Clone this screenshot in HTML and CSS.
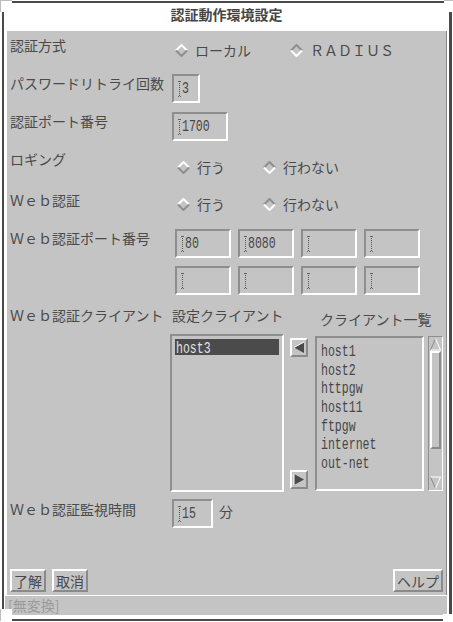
FILE: index.html
```html
<!DOCTYPE html>
<html lang="ja">

<head>
    <meta charset="UTF-8">
    <title>認証動作環境設定</title>
    <link rel="stylesheet" href="styles.css">
</head>

<body>
    <div class="window">
        <div class="corner corner-tl"></div>
        <div class="corner corner-tr"></div>
        <div class="corner corner-bl"></div>
        <div class="corner corner-br"></div>

        <div class="title">認証動作環境設定</div>

        <div class="panel">
            <div class="row row-a">
                <div class="label">認証方式</div>
                <div class="radios radios-wide">
                    <label class="radio">
                        <svg class="diamond" width="13" height="13" viewBox="0 0 13 13">
                            <polyline class="hi" points="1,6.5 6.5,1 12,6.5" />
                            <polyline class="lo" points="1,6.5 6.5,12 12,6.5" />
                        </svg>ローカル</label>
                    <label class="radio on">
                        <svg class="diamond" width="13" height="13" viewBox="0 0 13 13">
                            <polyline class="hi" points="1,6.5 6.5,1 12,6.5" />
                            <polyline class="lo" points="1,6.5 6.5,12 12,6.5" />
                        </svg>ＲＡＤＩＵＳ</label>
                </div>
            </div>

            <div class="row row-b">
                <div class="label">パスワードリトライ回数</div>
                <div class="field w-28"><span class="caret"></span><span class="num">3</span></div>
            </div>

            <div class="row row-c">
                <div class="label">認証ポート番号</div>
                <div class="field w-56"><span class="caret"></span><span class="num">1700</span></div>
            </div>

            <div class="row row-d">
                <div class="label">ロギング</div>
                <div class="radios">
                    <label class="radio">
                        <svg class="diamond" width="13" height="13" viewBox="0 0 13 13">
                            <polyline class="hi" points="1,6.5 6.5,1 12,6.5" />
                            <polyline class="lo" points="1,6.5 6.5,12 12,6.5" />
                        </svg>行う</label>
                    <label class="radio on">
                        <svg class="diamond" width="13" height="13" viewBox="0 0 13 13">
                            <polyline class="hi" points="1,6.5 6.5,1 12,6.5" />
                            <polyline class="lo" points="1,6.5 6.5,12 12,6.5" />
                        </svg>行わない</label>
                </div>
            </div>

            <div class="row row-e">
                <div class="label">Ｗｅｂ認証</div>
                <div class="radios">
                    <label class="radio">
                        <svg class="diamond" width="13" height="13" viewBox="0 0 13 13">
                            <polyline class="hi" points="1,6.5 6.5,1 12,6.5" />
                            <polyline class="lo" points="1,6.5 6.5,12 12,6.5" />
                        </svg>行う</label>
                    <label class="radio on">
                        <svg class="diamond" width="13" height="13" viewBox="0 0 13 13">
                            <polyline class="hi" points="1,6.5 6.5,1 12,6.5" />
                            <polyline class="lo" points="1,6.5 6.5,12 12,6.5" />
                        </svg>行わない</label>
                </div>
            </div>

            <div class="row row-f">
                <div class="label">Ｗｅｂ認証ポート番号</div>
                <div class="ports">
                    <div class="field w-56"><span class="caret"></span><span class="num">80</span></div>
                    <div class="field w-56"><span class="caret"></span><span class="num">8080</span></div>
                    <div class="field w-56"><span class="caret"></span></div>
                    <div class="field w-56"><span class="caret"></span></div>
                    <div class="field w-56"><span class="caret"></span></div>
                    <div class="field w-56"><span class="caret"></span></div>
                    <div class="field w-56"><span class="caret"></span></div>
                    <div class="field w-56"><span class="caret"></span></div>
                </div>
            </div>

            <div class="row row-g">
                <div class="label">Ｗｅｂ認証クライアント</div>
                <div class="clients">
                    <div class="col-set">
                        <div class="head">設定クライアント</div>
                        <div class="list list-set">
                            <div class="item selected"><span class="mono">host3</span></div>
                        </div>
                    </div>
                    <div class="arrows">
                        <div class="arrow-btn">
                            <svg width="14" height="15" viewBox="0 0 14 15">
                                <polygon points="2,7.5 12,2 12,13" fill="#4a4a4a" />
                                <polyline points="12,2 2,7.5" stroke="#fff" stroke-width="1" fill="none" />
                            </svg>
                        </div>
                        <div class="arrow-btn">
                            <svg width="14" height="15" viewBox="0 0 14 15">
                                <polygon points="12,7.5 2,2 2,13" fill="#4a4a4a" />
                                <polyline points="2,13 2,2" stroke="#fff" stroke-width="1" fill="none" />
                            </svg>
                        </div>
                    </div>
                    <div class="col-all">
                        <div class="head head-all">クライアント一覧</div>
                        <div class="list-wrap">
                            <div class="list list-all">
                                <div class="item"><span class="mono">host1</span></div>
                                <div class="item"><span class="mono">host2</span></div>
                                <div class="item"><span class="mono">httpgw</span></div>
                                <div class="item"><span class="mono">host11</span></div>
                                <div class="item"><span class="mono">ftpgw</span></div>
                                <div class="item"><span class="mono">internet</span></div>
                                <div class="item"><span class="mono">out-net</span></div>
                            </div>
                            <div class="scrollbar">
                                <svg class="sb-arrow" width="13" height="14" viewBox="0 0 13 14">
                                    <polyline points="1.5,13 6.5,1.5" stroke="#8a8a8a" fill="none" />
                                    <polyline points="6.5,1.5 11.5,13 1.5,13" stroke="#fff" fill="none" />
                                </svg>
                                <div class="thumb"></div>
                                <div class="track"></div>
                                <svg class="sb-arrow" width="13" height="14" viewBox="0 0 13 14">
                                    <polyline points="1.5,1 6.5,12.5" stroke="#8a8a8a" fill="none" />
                                    <polyline points="1.5,1 11.5,1 6.5,12.5" stroke="#fff" fill="none" />
                                </svg>
                            </div>
                        </div>
                    </div>
                </div>
            </div>

            <div class="row row-h">
                <div class="label">Ｗｅｂ認証監視時間</div>
                <div class="with-unit">
                    <div class="field w-41"><span class="caret"></span><span class="num">15</span></div>
                    <span class="unit">分</span>
                </div>
            </div>

            <div class="footer">
                <button class="btn">了解</button>
                <button class="btn">取消</button>
                <button class="btn btn-help">ヘルプ</button>
            </div>
        </div>

        <div class="status">[無変換]</div>
    </div>
</body>

</html>
```

FILE: styles.css
```css
body {
    margin: 0;
    background-color: #fff;
    font-family: "Noto Sans CJK JP", "Liberation Sans", sans-serif;
    font-size: 14px;
    color: #4a4a4a;
}

.window {
    position: relative;
    width: 445px;
    height: 616px;
    margin: 1px 0 0 2px;
    border-style: solid;
    border-color: #4a4a4a;
    border-width: 2px 3px 2px 2px;
    background-color: #fff;
}

/* frame corner handles */
.corner {
    position: absolute;
    width: 11px;
    height: 11px;
    background-color: #fff;
    border-top: 1px solid #bdbdbd;
    border-left: 1px solid #bdbdbd;
}

.corner-tl {
    left: -4px;
    top: -3px;
}

.corner-tr {
    right: -5px;
    top: -3px;
    width: 10px;
    border-left: none;
}

.corner-bl {
    left: -4px;
    bottom: -4px;
    height: 14px;
    border-top: none;
}

.corner-br {
    right: -5px;
    bottom: -4px;
    height: 9px;
    border-top: none;
    border-left: none;
}

.title {
    height: 28px;
    padding-top: 2px;
    box-sizing: border-box;
    line-height: 18px;
    text-align: center;
    font-weight: bold;
    color: #454545;
}

.panel {
    margin: 0 2px 0 3px;
    padding: 5px 3px 3px 3px;
    background-color: #c4c4c4;
    border-right: 1px solid #8a8a8a;
    display: flex;
    flex-direction: column;
}

.row {
    display: grid;
    grid-template-columns: 162px 1fr;
    align-items: start;
}

.label {
    line-height: 18px;
    white-space: nowrap;
}

.row-b { margin-top: 15px; }
.row-c { margin-top: 9px; }
.row-d { margin-top: 9px; }
.row-e { margin-top: 15px; }
.row-f { margin-top: 16px; }
.row-g { margin-top: 11px; }
.row-h { margin-top: 7px; }

.row-h .label { padding-top: 1px; }

/* radio diamonds */
.radios {
    display: flex;
    align-items: center;
    height: 18px;
    margin-left: 5px;
    line-height: 18px;
}

.row-a .radios { margin-top: 5px; margin-left: 3px; }
.row-d .radios { margin-top: 8px; }
.row-e .radios { margin-top: 4px; }

.radio {
    display: flex;
    align-items: center;
    width: 86px;
    white-space: nowrap;
}

.radios-wide .radio:first-child {
    width: 115px;
}

.diamond {
    flex: none;
    margin-right: 7px;
}

.diamond polyline {
    fill: none;
    stroke-width: 2;
}

.diamond .hi { stroke: #fff; }
.diamond .lo { stroke: #8e8e8e; }

.radio.on .diamond .hi { stroke: #8e8e8e; }
.radio.on .diamond .lo { stroke: #fff; }

/* text fields */
.field {
    display: flex;
    align-items: center;
    box-sizing: border-box;
    height: 29px;
    padding-left: 4px;
    border: 2px solid;
    border-color: #8e8e8e #fff #fff #8e8e8e;
}

.w-28 { width: 28px; }
.w-41 { width: 41px; }
.w-56 { width: 56px; }

.caret {
    position: relative;
    width: 3px;
    height: 15px;
    margin-right: 1px;
}

.caret::before {
    content: "";
    position: absolute;
    left: 1px;
    top: 0;
    height: 15px;
    border-left: 1px dotted #555;
}

.caret::after {
    content: "";
    position: absolute;
    left: 0;
    top: 0;
    width: 3px;
    height: 14px;
    border-top: 1px dotted #666;
    border-bottom: 1px dotted #666;
}

.num,
.mono {
    display: inline-block;
    font-family: "Liberation Mono", "DejaVu Sans Mono", monospace;
    font-size: 17px;
    transform: scaleX(0.68);
    transform-origin: left center;
    color: #474747;
    white-space: nowrap;
}

.ports {
    display: grid;
    grid-template-columns: repeat(4, 56px);
    column-gap: 7px;
    row-gap: 8px;
    margin-left: 3px;
}

/* client lists */
.clients {
    display: flex;
    align-items: flex-start;
    margin-left: -2px;
}

.head {
    line-height: 18px;
    padding-left: 2px;
    white-space: nowrap;
}

.col-set {
    width: 114px;
}

.list {
    box-sizing: border-box;
    padding: 3px;
    border: 2px solid;
    border-color: #8e8e8e #fff #fff #8e8e8e;
}

.list-set {
    height: 158px;
    margin-top: 10px;
}

.item {
    height: 18.7px;
    line-height: 18.7px;
    padding-left: 1px;
}

.item.selected {
    height: 16px;
    line-height: 17px;
    background-color: #4b4b4b;
}

.item.selected .mono {
    color: #e0e0e0;
}

.arrows {
    display: flex;
    flex-direction: column;
    justify-content: space-between;
    height: 151px;
    margin: 32px 0 0 6px;
}

.arrow-btn {
    box-sizing: border-box;
    width: 18px;
    height: 19px;
    border: 2px solid;
    border-color: #fff #8a8a8a #8a8a8a #fff;
    display: flex;
}

.col-all {
    margin-left: 7px;
}

.head-all {
    margin-top: 4px;
    padding-left: 5px;
}

.list-wrap {
    display: flex;
    margin-top: 8px;
}

.list-all {
    width: 109px;
    height: 155px;
}

.scrollbar {
    box-sizing: border-box;
    width: 15px;
    height: 155px;
    margin-left: 4px;
    border: 1px solid;
    border-color: #8e8e8e #fff #fff #8e8e8e;
    display: flex;
    flex-direction: column;
}

.thumb {
    height: 98px;
    margin: 0 1px 0 1px;
    box-sizing: border-box;
    border: 2px solid;
    border-color: #fff #8a8a8a #8a8a8a #fff;
}

.track {
    flex: 1;
}

.with-unit {
    display: flex;
    align-items: flex-start;
}

.unit {
    margin: 3px 0 0 6px;
    line-height: 18px;
}

/* buttons */
.footer {
    display: flex;
    gap: 6px;
    margin-top: 41px;
}

.btn {
    height: 23px;
    padding: 0 2px;
    box-sizing: border-box;
    font-family: "Noto Sans CJK JP", "Liberation Sans", sans-serif;
    font-size: 14px;
    line-height: 18px;
    color: #4a4a4a;
    background-color: #c4c4c4;
    border: 2px solid;
    border-color: #fff #8a8a8a #8a8a8a #fff;
}

.btn-help {
    margin-left: auto;
}

.status {
    margin: 0 2px 0 1px;
    height: 20px;
    box-sizing: border-box;
    padding-left: 3px;
    border-top: 1px solid #fff;
    background-color: #c4c4c4;
    line-height: 18px;
    color: #9a9a9a;
}
```
